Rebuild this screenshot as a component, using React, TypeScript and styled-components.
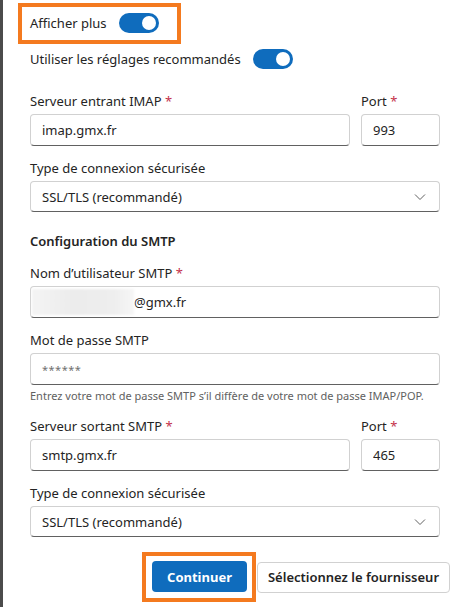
import React from "react";
import styled, { createGlobalStyle } from "styled-components";

const GlobalStyle = createGlobalStyle`
  * { box-sizing: border-box; }
  body {
    margin: 0;
    background: #fff;
    font-family: "Noto Sans", "Open Sans", sans-serif;
    color: #242424;
  }
`;

export default function App() {
  return (
    <>
      <GlobalStyle />
      <Page>
        <Content>
          <Highlight>
            <ToggleRow>
              <RowText>Afficher plus</RowText>
              <Toggle on />
            </ToggleRow>
          </Highlight>
          <ToggleRow style={{ marginTop: 5 }}>
            <RowText>Utiliser les réglages recommandés</RowText>
            <Toggle on />
          </ToggleRow>

          <Form>
            <Split>
              <Field>
                <Label>
                  Serveur entrant IMAP <Req>*</Req>
                </Label>
                <Input readOnly value="imap.gmx.fr" />
              </Field>
              <PortField>
                <Label>
                  Port <Req>*</Req>
                </Label>
                <Input readOnly value="993" />
              </PortField>
            </Split>

            <Field>
              <Label>Type de connexion sécurisée</Label>
              <Select value="SSL/TLS (recommandé)" />
            </Field>

            <SectionTitle>Configuration du SMTP</SectionTitle>

            <Field>
              <Label>
                Nom d’utilisateur SMTP <Req>*</Req>
              </Label>
              <FakeInput>
                <Blurred />
                @gmx.fr
              </FakeInput>
            </Field>

            <Field>
              <Label>Mot de passe SMTP</Label>
              <FakeInput>
                <Masked>******</Masked>
              </FakeInput>
              <Hint>
                Entrez votre mot de passe SMTP s’il diffère de votre mot de passe IMAP/POP.
              </Hint>
            </Field>

            <Split>
              <Field>
                <Label>
                  Serveur sortant SMTP <Req>*</Req>
                </Label>
                <Input readOnly value="smtp.gmx.fr" />
              </Field>
              <PortField>
                <Label>
                  Port <Req>*</Req>
                </Label>
                <Input readOnly value="465" />
              </PortField>
            </Split>

            <Field>
              <Label>Type de connexion sécurisée</Label>
              <Select value="SSL/TLS (recommandé)" />
            </Field>
          </Form>

          <Actions>
            <ButtonHighlight>
              <PrimaryButton>Continuer</PrimaryButton>
            </ButtonHighlight>
            <SecondaryButton>Sélectionnez le fournisseur</SecondaryButton>
          </Actions>
        </Content>
      </Page>
    </>
  );
}

function Toggle({ on }: { on?: boolean }) {
  return (
    <Track on={on}>
      <Thumb />
    </Track>
  );
}

function Select({ value }: { value: string }) {
  return (
    <SelectBox>
      <span>{value}</span>
      <svg width="12" height="8" viewBox="0 0 12 8" fill="none">
        <path d="M1 1.5L6 6.5L11 1.5" stroke="#616161" strokeWidth="1" />
      </svg>
    </SelectBox>
  );
}

const Page = styled.div`
  width: 461px;
  min-height: 607px;
  border-left: 3px solid #4b4b4b;
`;

const Content = styled.div`
  padding: 3px 21px 0 27px;
  display: flex;
  flex-direction: column;
`;

const Highlight = styled.div`
  align-self: flex-start;
  margin-left: -12px;
  border: 4px solid #f47a1f;
  padding: 6px 18px 7px 8px;
`;

const ToggleRow = styled.div`
  display: flex;
  align-items: center;
  gap: 12px;
  height: 20px;
`;

const RowText = styled.span`
  font-size: 13px;
  line-height: 20px;
`;

const Track = styled.div<{ on?: boolean }>`
  width: 40px;
  height: 20px;
  border-radius: 10px;
  background: ${(p) => (p.on ? "#0f6cbd" : "#fff")};
  display: flex;
  align-items: center;
  justify-content: ${(p) => (p.on ? "flex-end" : "flex-start")};
  padding: 0 3px;
`;

const Thumb = styled.div`
  width: 14px;
  height: 14px;
  border-radius: 50%;
  background: #fff;
`;

const Form = styled.div`
  margin-top: 22px;
  display: flex;
  flex-direction: column;
  gap: 12px;
`;

const Split = styled.div`
  display: flex;
  gap: 11px;
`;

const Field = styled.div`
  flex: 1;
  display: flex;
  flex-direction: column;
  gap: 3px;
`;

const PortField = styled(Field)`
  flex: 0 0 79px;
`;

const Label = styled.label`
  font-size: 13px;
  line-height: 20px;
`;

const Req = styled.span`
  color: #c4314b;
`;

const inputStyles = `
  width: 100%;
  height: 32px;
  border: 1px solid #d1d1d1;
  border-bottom-color: #616161;
  border-radius: 4px;
  background: #fff;
  padding: 0 11px;
  font-family: "Noto Sans", "Open Sans", sans-serif;
  font-size: 13px;
  color: #242424;
  outline: none;
`;

const Input = styled.input`
  ${inputStyles}
`;

const FakeInput = styled.div`
  ${inputStyles}
  display: flex;
  align-items: center;
`;

const Blurred = styled.span`
  margin-left: -10px;
  width: 102px;
  height: 26px;
  background: linear-gradient(90deg, #f4f4f4 0%, #ececec 40%, #eeeeee 80%, #f6f6f6 100%);
  filter: blur(1px);
`;

const Masked = styled.span`
  font-size: 11px;
  color: #707070;
  letter-spacing: 0.5px;
`;

const Hint = styled.div`
  margin-top: 0;
  font-size: 11px;
  line-height: 16px;
  color: #616161;
  white-space: nowrap;
`;

const SelectBox = styled.div`
  ${inputStyles}
  height: 31px;
  display: flex;
  align-items: center;
  justify-content: space-between;
  padding-right: 13px;
`;

const SectionTitle = styled.div`
  margin-top: 7px;
  font-size: 13px;
  font-weight: 600;
  line-height: 20px;
`;

const Actions = styled.div`
  margin-top: 15px;
  margin-right: -10px;
  display: flex;
  justify-content: flex-end;
  align-items: center;
  gap: 1px;
`;

const ButtonHighlight = styled.div`
  border: 4px solid #f47a1f;
  padding: 5px 5px 6px 6px;
  display: flex;
`;

const buttonBase = `
  height: 31px;
  border-radius: 4px;
  font-family: "Noto Sans", "Open Sans", sans-serif;
  font-size: 13px;
  font-weight: 600;
  cursor: pointer;
`;

const PrimaryButton = styled.button`
  ${buttonBase}
  width: 95px;
  border: none;
  background: #0f6cbd;
  color: #fff;
  font-weight: 700;
`;

const SecondaryButton = styled.button`
  ${buttonBase}
  width: 193px;
  border: 1px solid #d1d1d1;
  background: #fff;
  color: #242424;
`;
